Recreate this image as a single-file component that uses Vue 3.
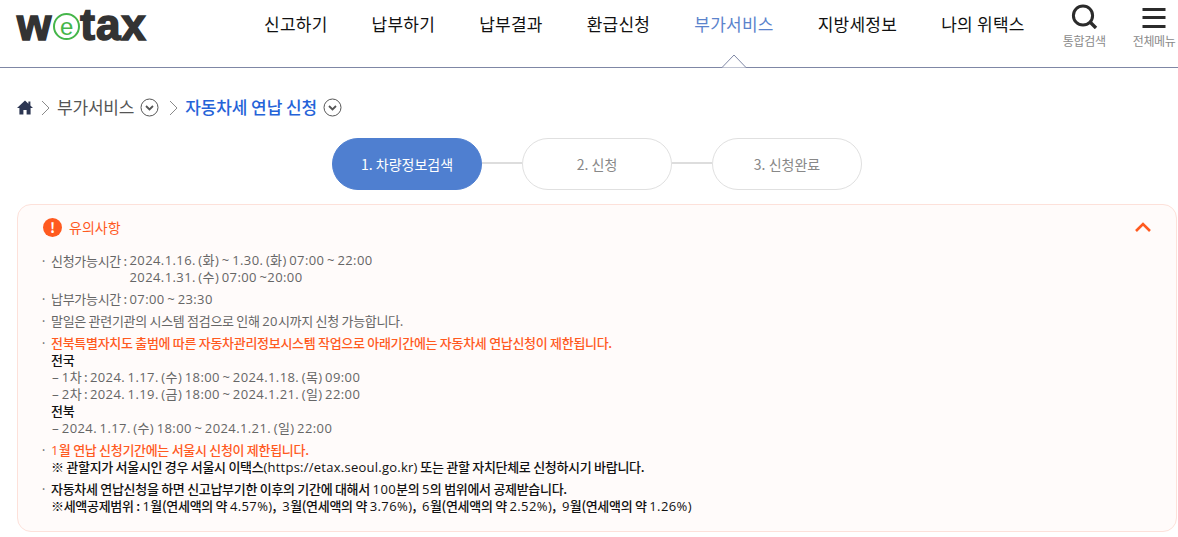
<template>
  <div class="page">
    <header class="top">
      <div class="logo">
        <span class="logo-txt">w</span>
        <span class="logo-e">e</span>
        <span class="logo-txt">tax</span>
      </div>
      <nav class="gnb">
        <a v-for="m in menus" :key="m" href="#" :class="{ on: m === '부가서비스' }">{{ m }}</a>
      </nav>
      <div class="tools">
        <a href="#" class="tool search">
          <svg width="28" height="28" viewBox="0 0 28 28" fill="none" stroke="#2b2b2b">
            <circle cx="13" cy="14.5" r="9.6" stroke-width="3" />
            <path d="M20 21l6 6" stroke-width="3.4" />
          </svg>
          <span>통합검색</span>
        </a>
        <a href="#" class="tool menu">
          <svg width="24" height="28" viewBox="0 0 24 28" fill="#2b2b2b">
            <rect x="0.5" y="7" width="23" height="3" />
            <rect x="0.5" y="15" width="23" height="3" />
            <rect x="0.5" y="24" width="23" height="3" />
          </svg>
          <span>전체메뉴</span>
        </a>
      </div>
      <svg class="notch" width="26" height="14" viewBox="0 0 26 14">
        <path d="M0 13.5h1L13 1l12 12.5h1" fill="#fff" stroke="#7f87a5" />
      </svg>
    </header>

    <div class="crumb">
      <svg width="16" height="15" viewBox="0 0 16 15" fill="#2c3652">
        <path d="M8 .5L0 8h2.4v6.6h4V10h3.2v4.6h4V8H16l-2.6-2.4V1.5h-2v2.2z" />
      </svg>
      <svg class="sep" width="9" height="16" viewBox="0 0 9 16" fill="none" stroke="#8a8a8a">
        <path d="M1 1l7 7-7 7" />
      </svg>
      <span class="crumb-txt">부가서비스</span>
      <svg class="drop" width="19" height="19" viewBox="0 0 19 19" fill="none" stroke="#555">
        <circle cx="9.5" cy="9.5" r="8.5" />
        <path d="M6 8l3.5 3.5L13 8" stroke-width="1.8" />
      </svg>
      <svg class="sep" width="9" height="16" viewBox="0 0 9 16" fill="none" stroke="#8a8a8a">
        <path d="M1 1l7 7-7 7" />
      </svg>
      <span class="crumb-cur">자동차세 연납 신청</span>
      <svg class="drop" width="19" height="19" viewBox="0 0 19 19" fill="none" stroke="#555">
        <circle cx="9.5" cy="9.5" r="8.5" />
        <path d="M6 8l3.5 3.5L13 8" stroke-width="1.8" />
      </svg>
    </div>

    <ol class="steps">
      <li v-for="(s, i) in steps" :key="s" :class="{ on: i === 0 }">{{ s }}</li>
    </ol>

    <section class="notice">
      <div class="notice-head">
        <span class="bang">!</span>
        <h2>유의사항</h2>
        <svg class="fold" width="18" height="12" viewBox="0 0 18 12" fill="none" stroke="#ff5a1f" stroke-width="2.6">
          <path d="M2 10l7-7 7 7" />
        </svg>
      </div>
      <ul>
        <li>
          <div class="time"><span>신청가능시간 :&nbsp;</span><span class="n">2024.1.16. (화) ~ 1.30. (화) 07:00 ~ 22:00<br />2024.1.31. (수) 07:00 ~20:00</span></div>
        </li>
        <li>납부가능시간 : <span class="n">07:00 ~ 23:30</span></li>
        <li>말일은 관련기관의 시스템 점검으로 인해 <span class="n">20</span>시까지 신청 가능합니다.</li>
        <li>
          <b class="warn">전북특별자치도 출범에 따른 자동차관리정보시스템 작업으로 아래기간에는 자동차세 연납신청이 제한됩니다.</b>
          <b class="dark">전국</b>
          <div><span class="dash">-</span> <span class="n">1</span>차 : <span class="n">2024. 1.17. (수) 18:00 ~ 2024.1.18. (목) 09:00</span></div>
          <div><span class="dash">-</span> <span class="n">2</span>차 : <span class="n">2024. 1.19. (금) 18:00 ~ 2024.1.21. (일) 22:00</span></div>
          <b class="dark">전북</b>
          <div><span class="dash">-</span> <span class="n">2024. 1.17. (수) 18:00 ~ 2024.1.21. (일) 22:00</span></div>
        </li>
        <li>
          <b class="warn"><span class="n">1</span>월 연납 신청기간에는 서울시 신청이 제한됩니다.</b>
          <b class="dark">※ 관할지가 서울시인 경우 서울시 이택스<span class="n url">(https://etax.seoul.go.kr)</span> 또는 관할 자치단체로 신청하시기 바랍니다.</b>
        </li>
        <li>
          <b class="dark">자동차세 연납신청을 하면 신고납부기한 이후의 기간에 대해서 <span class="n">100</span>분의 <span class="n">5</span>의 범위에서 공제받습니다.</b>
          <b class="dark">※세액공제범위 : <span class="n">1</span>월(연세액의 약 <span class="n">4.57%)</span><span class="comma">, </span><span class="n">3</span>월(연세액의 약 <span class="n">3.76%)</span><span class="comma">, </span><span class="n">6</span>월(연세액의 약 <span class="n">2.52%)</span><span class="comma">, </span><span class="n">9</span>월(연세액의 약 <span class="n">1.26%)</span></b>
        </li>
      </ul>
    </section>
  </div>
</template>

<script setup>
const menus = ['신고하기', '납부하기', '납부결과', '환급신청', '부가서비스', '지방세정보', '나의 위택스']
const steps = ['1. 차량정보검색', '2. 신청', '3. 신청완료']
</script>

<style>
html, body {
  background: #fff;
}
</style>

<style scoped>
.page {
  width: 1178px;
  height: 537px;
  overflow: hidden;
  font-family: "Noto Sans CJK KR", "Noto Sans", sans-serif;
  color: #666;
}

a {
  text-decoration: none;
  color: inherit;
}

.top {
  position: relative;
  display: flex;
  align-items: flex-start;
  height: 68px;
  box-sizing: border-box;
  border-bottom: 1px solid #7f87a5;
}

.logo {
  display: flex;
  flex-shrink: 0;
  align-items: flex-start;
  width: 247px;
  height: 50px;
  padding-left: 17px;
  font-family: "Liberation Sans", sans-serif;
  font-weight: 700;
  font-size: 44px;
  color: #333;
}

.logo-txt {
  display: block;
  line-height: 50px;
  letter-spacing: 1px;
  -webkit-text-stroke: 1.6px #333;
}

.logo-e {
  display: flex;
  align-items: center;
  justify-content: center;
  box-sizing: border-box;
  width: 27px;
  height: 27px;
  margin: 13px 0 0 1px;
  border: 2px solid #45b64a;
  border-radius: 50%;
  color: #45b64a;
  font-weight: 400;
  font-size: 24px;
  line-height: 1;
}

.gnb {
  display: flex;
  flex-shrink: 0;
  gap: 44px;
  height: 46px;
  align-items: center;
  color: #111;
  font-size: 17px;
  letter-spacing: 0.25px;
  white-space: nowrap;
}

.gnb .on {
  color: #5b83cc;
}

.tools {
  display: flex;
  flex-shrink: 0;
  margin-left: 38px;
}

.tool {
  display: flex;
  flex-direction: column;
  align-items: center;
  padding-top: 1px;
  font-size: 12px;
  color: #8a8a8a;
  white-space: nowrap;
}

.tool span {
  margin-top: 3px;
  letter-spacing: -0.3px;
}

.menu {
  margin-left: 27px;
}

.notch {
  position: absolute;
  left: 721px;
  bottom: -1px;
}

.crumb {
  display: flex;
  align-items: center;
  height: 19px;
  margin-top: 30px;
  padding-left: 17px;
}

.sep {
  margin: 0 7px 0 8px;
}

.crumb-txt {
  padding-bottom: 2px;
  font-size: 17px;
  color: #555;
  letter-spacing: -0.2px;
}

.crumb-cur {
  padding-bottom: 2px;
  font-size: 17px;
  font-weight: 500;
  color: #2563d8;
  letter-spacing: -0.1px;
}

.drop {
  margin: 0 2px 0 6px;
}

.steps {
  display: flex;
  justify-content: center;
  gap: 40px;
  margin: 21px 0 0;
  padding: 0 0 0 16px;
  list-style: none;
}

.steps li {
  position: relative;
  display: flex;
  align-items: center;
  justify-content: center;
  box-sizing: border-box;
  width: 150px;
  height: 52px;
  border: 1px solid #e0e0e0;
  border-radius: 26px;
  font-size: 14px;
  color: #888;
}

.steps li + li::before {
  content: "";
  position: absolute;
  left: -41px;
  top: 23px;
  width: 40px;
  height: 2px;
  background: #ddd;
}

.steps li.on {
  background: #4f7fd0;
  border-color: #4f7fd0;
  color: #fff;
}

.notice {
  box-sizing: border-box;
  width: 1160px;
  height: 328px;
  margin: 14px 0 0 17px;
  padding: 12px 24px 0 25px;
  border: 1px solid #fde1da;
  border-radius: 14px;
  background: #fffbfa;
}

.notice-head {
  display: flex;
  align-items: center;
  height: 20px;
}

.bang {
  display: flex;
  align-items: center;
  justify-content: center;
  width: 19px;
  height: 19px;
  border-radius: 50%;
  background: #ff5a1f;
  color: #fff;
  font-size: 14px;
  font-weight: 700;
  line-height: 1;
}

.notice-head h2 {
  margin: 0 0 0 7px;
  font-size: 14px;
  font-weight: 400;
  color: #ff5a1f;
}

.fold {
  margin-left: auto;
}

.notice ul {
  margin: 15px 0 0;
  padding: 0;
  list-style: none;
  font-size: 13px;
  line-height: 17px;
  letter-spacing: -0.3px;
}

.notice li {
  position: relative;
  margin-bottom: 5px;
  padding-left: 8px;
}

.notice li:first-child {
  margin-bottom: 4px;
}

.notice li::before {
  content: "·";
  position: absolute;
  left: -3px;
  top: 0;
}

.time {
  display: flex;
}

.notice b {
  display: block;
  font-weight: 500;
}

/* 숫자/영문은 원본이 더 넓게 찍혀서 따로 잡음 */
.n {
  font-family: "Open Sans", "Noto Sans CJK KR", sans-serif;
  letter-spacing: 0.4px;
  word-spacing: -1.2px;
}

.time .n {
  line-height: 17px;
}

li div .n,
li > .n,
b .n {
  line-height: 0;
}

.url {
  letter-spacing: 0.25px;
}

.comma {
  word-spacing: 3.5px;
}

.dash {
  display: inline-block;
  margin: 0 2px;
  transform: scaleX(1.7);
}

.warn {
  color: #ff5a1f;
}

.dark {
  color: #111;
}
</style>
